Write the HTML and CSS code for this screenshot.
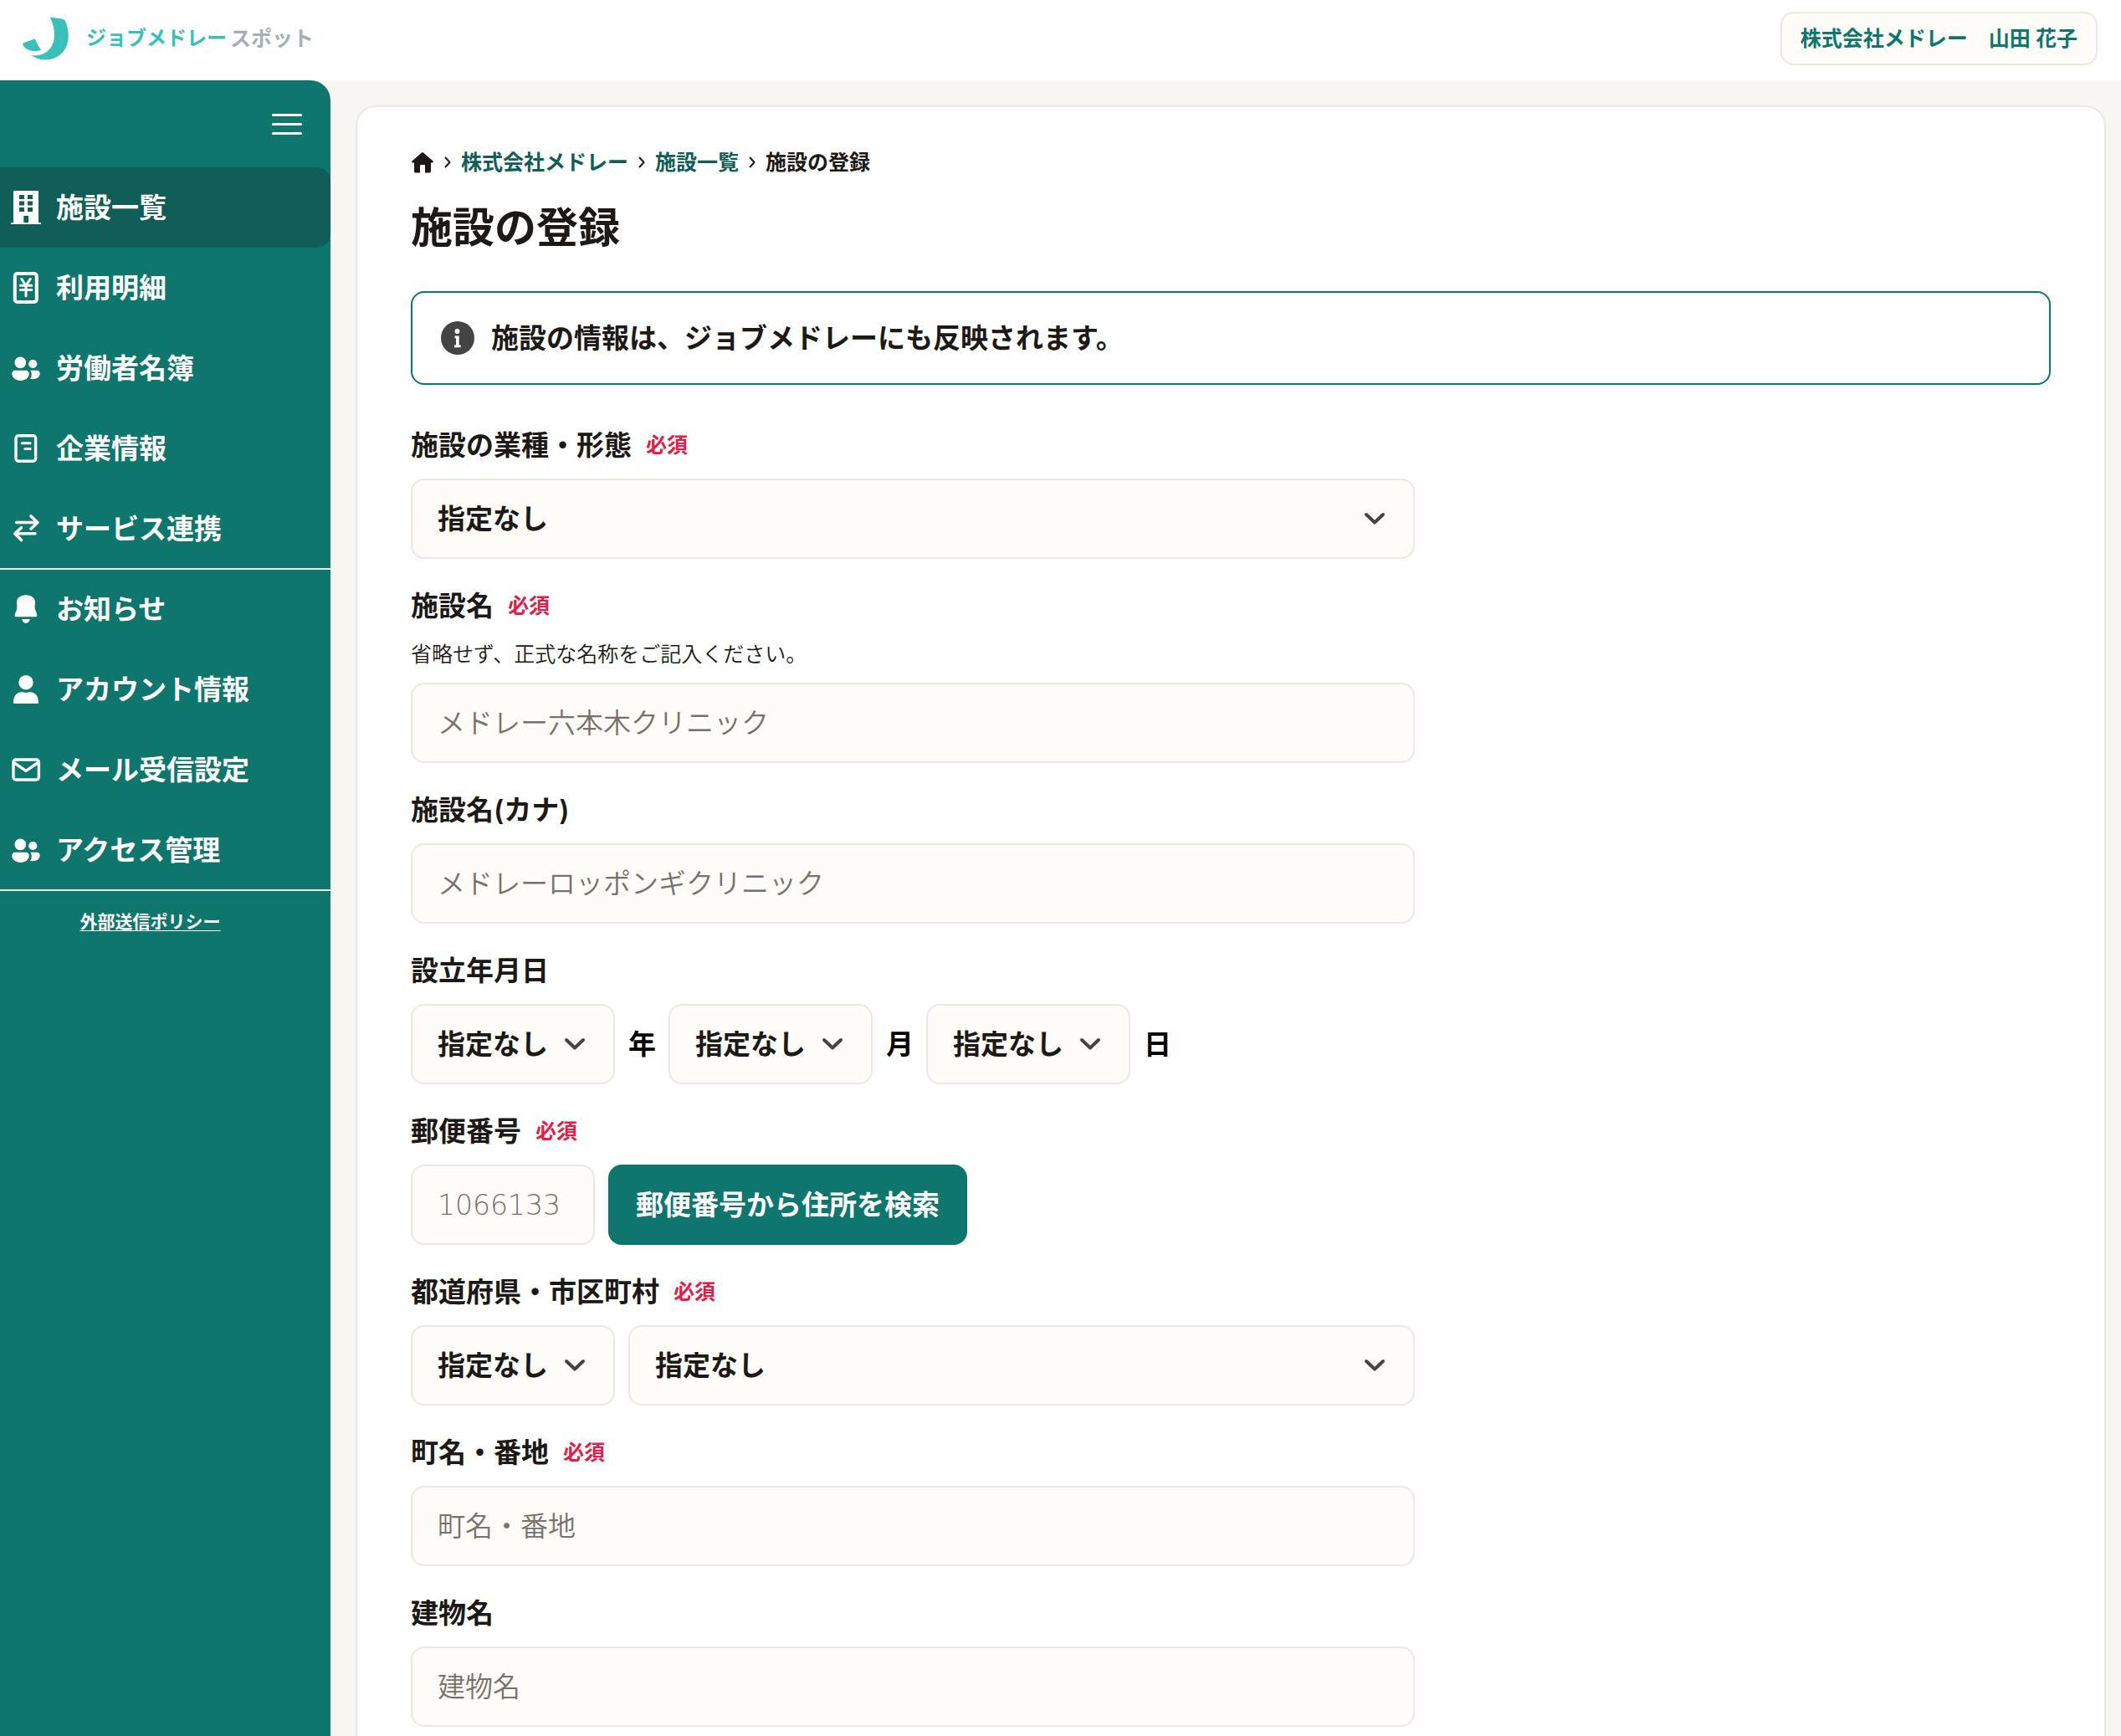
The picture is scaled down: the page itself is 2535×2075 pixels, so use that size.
FILE: index.html
```html
<!DOCTYPE html>
<html lang="ja">
<head>
    <meta charset="UTF-8">
    <meta name="viewport" content="width=device-width, initial-scale=1.0">
    <title>施設の登録</title>
    <link rel="stylesheet" href="styles.css">
</head>
<body>
    <svg class="defs" aria-hidden="true">
        <symbol id="users" viewBox="0 0 40 40">
            <circle cx="13.3" cy="13.4" r="6.8"/>
            <circle cx="28.3" cy="15" r="5.1"/>
            <path d="M7 22.8h13c2.3 0 3.7 1.8 3.7 4 0 4.800-4.700 8.200-10.200 8.200S3.300 31.600 3.300 26.800c0-2.200 1.400-4 3.700-4z"/>
            <path d="M25.400 22.800h7.900c2 0 3.400 1.500 3.400 3.600 0 4.600-4.700 7.400-11.700 6.600 1.900-2.200 2.500-6.700.4-10.200z"/>
        </symbol>
        <symbol id="chevron" viewBox="0 0 32 32">
            <path d="M6 11l10 9.500L26 11" fill="none" stroke="currentColor" stroke-width="4" stroke-linecap="round" stroke-linejoin="round"/>
        </symbol>
        <symbol id="next" viewBox="0 0 8 16">
            <path d="M1.500 2.500L6.500 8l-5 5.500" fill="none" stroke="currentColor" stroke-width="2" stroke-linecap="round" stroke-linejoin="round"/>
        </symbol>
    </svg>

    <header class="header">
        <a class="logo" href="#">
            <svg class="logo-mark" viewBox="0 0 56 52" aria-hidden="true">
                <path d="M34 .5c5 1 10 1.600 14.500 2.500 1 .2 1.700.8 2.200 1.700 3 6 4 12.300 4 18.300C54.700 40 43 51.500 27 51.500c-6.500 0-12-2-16.500-5.500 3 .5 6 .6 9 0 12-2.500 18.500-12 18.500-24 0-7-1.500-14-4.600-19.800C33 1.200 33 .5 34 .5z"/>
                <path d="M.5 31.500L13.500 26.700c.8-.3 1.400 0 1.800.8 1.700 4.300 4 8.500 7 12.300-8 3.200-17.300.5-20.800-4.300C.5 34.200-.3 32 .5 31.500z"/>
            </svg>
            <span class="logo-text">ジョブメドレー</span>
            <span class="logo-text logo-sub">スポット</span>
        </a>
        <button class="account" type="button">株式会社メドレー　山田 花子</button>
    </header>

    <div class="layout">
        <nav class="sidebar">
            <div class="sidebar-top">
                <button class="menu-toggle" type="button" aria-label="メニュー">
                    <span></span>
                    <span></span>
                    <span></span>
                </button>
            </div>
            <a class="nav-item active" href="#">
                <svg class="icon" viewBox="0 0 40 40"><path fill-rule="evenodd" d="M6 0h28q1 0 1 1v37h3v2H2v-2h3V1q0-1 1-1zM12 5v5h6V5zM22 5v5h6V5zM12 12.500v5h6v-5zM22 12.500v5h6v-5zM12 20v5h6v-5zM22 20v5h6v-5zM17.300 30v8h5.700v-8z"/></svg>
                施設一覧
            </a>
            <a class="nav-item" href="#">
                <svg class="icon line" viewBox="0 0 40 40"><rect x="6.800" y="3" width="26" height="34" rx="3" stroke-width="4"/><path d="M14.800 9.500L20 17.300l5.200-7.800M20 17.300v12.500M13.200 17.300h13.600M13.200 22.400h13.600" stroke-width="3"/></svg>
                利用明細
            </a>
            <a class="nav-item" href="#">
                <svg class="icon"><use href="#users"/></svg>
                労働者名簿
            </a>
            <a class="nav-item" href="#">
                <svg class="icon line" viewBox="0 0 40 40"><rect x="8" y="4.800" width="23.600" height="30.400" rx="3"/><path d="M15.300 13.800h9.800M18.800 20.400h6.300" stroke-width="3"/></svg>
                企業情報
            </a>
            <a class="nav-item" href="#">
                <svg class="icon line" viewBox="0 0 40 40"><path d="M8.500 12.500h25M26 5l8 7.500-8 7.500M31 25.800H7M14.500 18.700l-7.700 7.100 7.700 7.700" stroke-width="3.600"/></svg>
                サービス連携
            </a>
            <hr class="nav-line">
            <a class="nav-item" href="#">
                <svg class="icon" viewBox="0 0 40 40"><path d="M20 3.300c7 0 11 3.600 11 8.700 0 2.500-.7 4-.3 7 .3 3 2.300 5 2.600 8.500 0 1-.3 1.700-1.300 1.700H8c-1 0-1.400-.7-1.300-1.700.3-3.500 2.300-5.500 2.600-8.500.3-3-.3-4.500-.3-7 0-5.100 4-8.700 11-8.700zM15.300 32h9.400c-.4 3-2.200 4.700-4.700 4.700S15.700 35 15.300 32z"/></svg>
                お知らせ
            </a>
            <a class="nav-item" href="#">
                <svg class="icon" viewBox="0 0 40 40"><circle cx="20" cy="11.700" r="8.700"/><path d="M5 35.500C5 27.500 9.500 23.300 15 23.300c2 0 3 .7 5 .7s3-.7 5-.7c5.500 0 10 4.200 10 12.200q0 1.500-1.500 1.500h-27Q5 37 5 35.500z"/></svg>
                アカウント情報
            </a>
            <a class="nav-item" href="#">
                <svg class="icon line" viewBox="0 0 40 40"><rect x="5" y="8" width="30.400" height="24" rx="3"/><path d="M5.500 11.500L20 21.400l14.500-9.900"/></svg>
                メール受信設定
            </a>
            <a class="nav-item" href="#">
                <svg class="icon"><use href="#users"/></svg>
                アクセス管理
            </a>
            <hr class="nav-line">
            <div class="policy"><a href="#">外部送信ポリシー</a></div>
        </nav>

        <main class="main">
            <div class="card">
                <nav class="breadcrumb">
                    <a class="home" href="#" aria-label="ホーム">
                        <svg viewBox="0 0 28 28"><path d="M13 2.400q1-.9 2 0L26.500 12.500q1 1.500-.5 2H24V25q0 1.500-1.500 1.500H17V18q0-1-1-1h-4q-1 0-1 1v8.500H5.500Q4 26.500 4 25V14.500H2q-1.500-.5-.5-2z"/></svg>
                    </a>
                    <svg class="next"><use href="#next"/></svg>
                    <a href="#">株式会社メドレー</a>
                    <svg class="next"><use href="#next"/></svg>
                    <a href="#">施設一覧</a>
                    <svg class="next"><use href="#next"/></svg>
                    <span>施設の登録</span>
                </nav>
                <h1>施設の登録</h1>
                <div class="notice">
                    <svg class="icon" viewBox="0 0 40 40"><circle cx="20" cy="20" r="20" fill="#444"/><circle cx="19.500" cy="12" r="2.900" fill="#fff"/><path d="M16.500 17.500h5.200v11h2v2.700h-7.700v-2.700h2v-8.300h-1.500z" fill="#fff"/></svg>
                    <p>施設の情報は、ジョブメドレーにも反映されます。</p>
                </div>

                <form class="form">
                    <div class="form-group">
                        <div class="form-label"><label for="category">施設の業種・形態</label><span class="required">必須</span></div>
                        <div class="select">
                            <select id="category"><option>指定なし</option></select>
                            <svg><use href="#chevron"/></svg>
                        </div>
                    </div>
                    <div class="form-group">
                        <div class="form-label"><label for="name">施設名</label><span class="required">必須</span></div>
                        <p class="help">省略せず、正式な名称をご記入ください。</p>
                        <input type="text" id="name" placeholder="メドレー六本木クリニック">
                    </div>
                    <div class="form-group">
                        <div class="form-label"><label for="kana">施設名(カナ)</label></div>
                        <input type="text" id="kana" placeholder="メドレーロッポンギクリニック">
                    </div>
                    <div class="form-group">
                        <div class="form-label"><label for="year">設立年月日</label></div>
                        <div class="row">
                            <div class="select small">
                                <select id="year"><option>指定なし</option></select>
                                <svg><use href="#chevron"/></svg>
                            </div>
                            <label class="unit" for="year">年</label>
                            <div class="select small">
                                <select id="month"><option>指定なし</option></select>
                                <svg><use href="#chevron"/></svg>
                            </div>
                            <label class="unit" for="month">月</label>
                            <div class="select small">
                                <select id="day"><option>指定なし</option></select>
                                <svg><use href="#chevron"/></svg>
                            </div>
                            <label class="unit" for="day">日</label>
                        </div>
                    </div>
                    <div class="form-group">
                        <div class="form-label"><label for="zip">郵便番号</label><span class="required">必須</span></div>
                        <div class="row">
                            <input type="text" id="zip" class="zip" placeholder="1066133">
                            <button class="btn" type="button">郵便番号から住所を検索</button>
                        </div>
                    </div>
                    <div class="form-group">
                        <div class="form-label"><label for="pref">都道府県・市区町村</label><span class="required">必須</span></div>
                        <div class="row">
                            <div class="select small">
                                <select id="pref"><option>指定なし</option></select>
                                <svg><use href="#chevron"/></svg>
                            </div>
                            <div class="select grow">
                                <select id="city" aria-label="市区町村"><option>指定なし</option></select>
                                <svg><use href="#chevron"/></svg>
                            </div>
                        </div>
                    </div>
                    <div class="form-group">
                        <div class="form-label"><label for="town">町名・番地</label><span class="required">必須</span></div>
                        <input type="text" id="town" placeholder="町名・番地">
                    </div>
                    <div class="form-group">
                        <div class="form-label"><label for="building">建物名</label></div>
                        <input type="text" id="building" placeholder="建物名">
                    </div>
                </form>
            </div>
        </main>
    </div>
</body>
</html>
```
FILE: styles.css
```css
* {
    box-sizing: border-box;
}
body {
    margin: 0;
    font-family: Inter, "Noto Sans CJK JP", sans-serif;
    font-size: 33px;
    line-height: 48px;
    font-weight: 600;
    color: #1c1917;
    background: #f7f6f2;
    display: flex;
    flex-direction: column;
    min-height: 100vh;
}
a {
    color: inherit;
    text-decoration: none;
}
p {
    margin: 0;
}
button,
input,
select {
    font: inherit;
    color: inherit;
}
.defs {
    display: none;
}

/* header */
.header {
    display: flex;
    align-items: center;
    justify-content: space-between;
    height: 96px;
    padding: 0 28px 4px 27px;
    background: #fff;
}
.logo {
    display: flex;
    align-items: center;
    color: #39c0ba;
}
.logo-mark {
    width: 56px;
    height: 52px;
    margin-right: 20px;
    fill: currentColor;
}
.logo-text {
    font-size: 24px;
    font-weight: 700;
}
.logo-sub {
    margin-left: 4px;
    font-size: 25px;
    color: #a6afb5;
}
.account {
    height: 64px;
    padding: 0 22px;
    font-size: 25px;
    line-height: 36px;
    color: #0f766e;
    background: #fdfcf8;
    border: 2px solid #ece8e1;
    border-radius: 16px;
}

/* sidebar */
.layout {
    flex: 1;
    display: flex;
}
.sidebar {
    width: 395px;
    flex-shrink: 0;
    color: #fff;
    background: #0f766e;
    border-top-right-radius: 24px;
}
.sidebar-top {
    display: flex;
    align-items: center;
    justify-content: flex-end;
    height: 104px;
    padding-right: 34px;
}
.menu-toggle {
    display: flex;
    flex-direction: column;
    gap: 8px;
    width: 36px;
    padding: 0;
    background: none;
    border: none;
}
.menu-toggle span {
    height: 3px;
    background: #fff;
    border-radius: 2px;
}
.nav-item {
    display: flex;
    align-items: center;
    gap: 16px;
    height: 96px;
    padding-left: 11px;
}
.nav-item.active {
    background: #115e59;
    border-radius: 0 16px 16px 0;
}
.icon {
    width: 40px;
    height: 40px;
    flex-shrink: 0;
    fill: currentColor;
}
.icon.line {
    fill: none;
    stroke: currentColor;
    stroke-width: 3.4;
    stroke-linecap: round;
    stroke-linejoin: round;
}
.nav-line {
    height: 2px;
    margin: -1px 0;
    border: none;
    background: #ece8e1;
}
.policy {
    padding: 20px 36px 0 0;
    font-size: 21px;
    line-height: 36px;
    text-align: center;
}
.policy a {
    text-decoration: underline;
    text-decoration-thickness: 1px;
    text-underline-offset: 3px;
}

/* main */
.main {
    flex: 1;
    display: flex;
    padding: 30px 18px 0 30px;
}
.card {
    flex: 1;
    padding: 48px 64px 0;
    background: #fff;
    border: 2px solid #ece8e1;
    border-bottom: none;
    border-radius: 24px 24px 0 0;
}
.breadcrumb {
    display: flex;
    align-items: center;
    gap: 12px;
    font-size: 25px;
    line-height: 36px;
}
.breadcrumb a {
    color: #115e59;
}
.breadcrumb .home {
    display: flex;
    color: #1c1917;
}
.home svg {
    width: 28px;
    height: 28px;
    fill: currentColor;
}
.next {
    width: 8px;
    height: 16px;
}
h1 {
    margin: 24px 0 40px;
    font-size: 50px;
    line-height: 72px;
    font-weight: 600;
}
.notice {
    display: flex;
    align-items: center;
    gap: 20px;
    padding: 30px 34px;
    border: 2px solid #0f766e;
    border-radius: 16px;
}

/* form */
.form {
    display: flex;
    flex-direction: column;
    gap: 32px;
    max-width: 1200px;
    margin-top: 48px;
}
.form-group {
    display: flex;
    flex-direction: column;
    gap: 16px;
}
.form-label {
    display: flex;
    align-items: center;
    gap: 17px;
}
.required {
    font-size: 25px;
    color: #e11d48;
}
.help {
    font-size: 25px;
    line-height: 36px;
    font-weight: 350;
}
.form input,
.form select {
    width: 100%;
    height: 96px;
    padding: 0 30px;
    background: #fdfcf8;
    border: 2px solid #ece8e1;
    border-radius: 16px;
    appearance: none;
}
.form input::placeholder {
    color: #78716c;
    font-weight: 350;
    opacity: 1;
}
.form input:focus,
.form select:focus {
    outline: none;
    border-color: #0f766e;
}
.select {
    position: relative;
}
.select svg {
    position: absolute;
    top: 32px;
    right: 32px;
    width: 32px;
    height: 32px;
    color: #444;
    pointer-events: none;
}
.small {
    width: 244px;
}
.grow {
    flex: 1;
}
.row {
    display: flex;
    align-items: center;
    gap: 16px;
}
.unit {
    width: 32px;
    color: #000;
}
.form .zip {
    width: 220px;
    font-family: "DejaVu Sans", "Noto Sans CJK JP", sans-serif;
}
.form .zip::placeholder {
    font-weight: 200;
}
.btn {
    height: 96px;
    padding: 0 33px;
    color: #fff;
    background: #0f766e;
    border: none;
    border-radius: 16px;
}
```
